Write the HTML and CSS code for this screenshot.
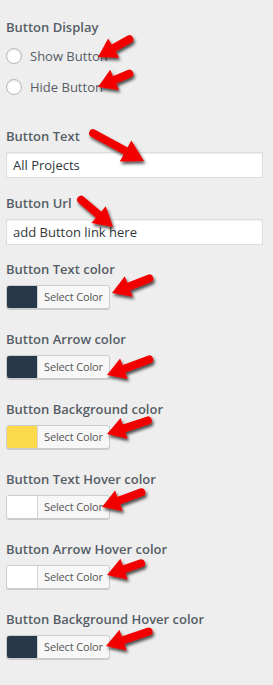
FILE: index.html
```html
<!DOCTYPE html>
<html lang="en">
<head>
  <meta charset="UTF-8">
  <title>Button Settings</title>
  <link rel="stylesheet" href="styles.css">
</head>
<body>

  <div class="panel">
    <div class="label">Button Display</div>
    <label class="radio"><span class="dot"></span>Show Button</label>
    <label class="radio"><span class="dot"></span>Hide Button</label>

    <div class="label first">Button Text</div>
    <div class="input">All Projects</div>

    <div class="label">Button Url</div>
    <div class="input">add Button link here</div>

    <div class="color-field">
      <div class="label">Button Text color</div>
      <div class="picker"><span class="swatch dark"></span><span class="pick-text">Select Color</span></div>
    </div>
    <div class="color-field">
      <div class="label">Button Arrow color</div>
      <div class="picker"><span class="swatch dark"></span><span class="pick-text">Select Color</span></div>
    </div>
    <div class="color-field">
      <div class="label">Button Background color</div>
      <div class="picker"><span class="swatch yellow"></span><span class="pick-text">Select Color</span></div>
    </div>
    <div class="color-field">
      <div class="label">Button Text Hover color</div>
      <div class="picker"><span class="swatch white"></span><span class="pick-text">Select Color</span></div>
    </div>
    <div class="color-field">
      <div class="label">Button Arrow Hover color</div>
      <div class="picker"><span class="swatch white"></span><span class="pick-text">Select Color</span></div>
    </div>
    <div class="color-field">
      <div class="label">Button Background Hover color</div>
      <div class="picker"><span class="swatch dark"></span><span class="pick-text">Select Color</span></div>
    </div>
  </div>

  <!-- red arrows drawn over the panel -->
  <svg class="arrows" width="273" height="685" viewBox="0 0 273 685">
    <defs>
      <filter id="sh" x="-20%" y="-20%" width="150%" height="150%">
        <feDropShadow dx="1.5" dy="2.5" stdDeviation="1.6" flood-color="#000" flood-opacity="0.7"/>
      </filter>
    </defs>
    <g filter="url(#sh)" fill="#f20000" stroke="#f20000" stroke-width="8" stroke-linecap="round">
      <g transform="translate(98 57) rotate(-29.7)"><path stroke="none" d="M0 0L18 -11 18 11Z"/><line x1="14" y1="0" x2="36" y2="0"/></g>
      <g transform="translate(98 87) rotate(-23.2)"><path stroke="none" d="M0 0L18 -11 18 11Z"/><line x1="14" y1="0" x2="34" y2="0"/></g>
      <g transform="translate(144 161) rotate(-151.4)"><path stroke="none" d="M0 0L21 -12 21 12Z"/><line x1="16" y1="0" x2="58" y2="0"/></g>
      <g transform="translate(113 227) rotate(-139.4)"><path stroke="none" d="M0 0L19 -11 19 11Z"/><line x1="14" y1="0" x2="42" y2="0"/></g>
      <g transform="translate(112 293) rotate(-21.3)"><path stroke="none" d="M0 0L18 -11 18 11Z"/><line x1="14" y1="0" x2="40" y2="0"/></g>
      <g transform="translate(107 375) rotate(-20.3)"><path stroke="none" d="M0 0L18 -11 18 11Z"/><line x1="14" y1="0" x2="45" y2="0"/></g>
      <g transform="translate(107 434) rotate(-18.4)"><path stroke="none" d="M0 0L18 -11 18 11Z"/><line x1="14" y1="0" x2="43" y2="0"/></g>
      <g transform="translate(102 507) rotate(-20.4)"><path stroke="none" d="M0 0L18 -11 18 11Z"/><line x1="14" y1="0" x2="42" y2="0"/></g>
      <g transform="translate(107 575) rotate(-18.9)"><path stroke="none" d="M0 0L18 -11 18 11Z"/><line x1="14" y1="0" x2="36" y2="0"/></g>
      <g transform="translate(106 646) rotate(-18.8)"><path stroke="none" d="M0 0L18 -11 18 11Z"/><line x1="14" y1="0" x2="45" y2="0"/></g>
    </g>
  </svg>

</body>
</html>
```

FILE: styles.css
```css
body {
  margin: 0;
  background: #eeeeee;
  font-family: "Open Sans", "Noto Sans", Arial, sans-serif;
  color: #555d66;
  position: relative;
  width: 273px;
  height: 685px;
  overflow: hidden;
}
.panel {
  padding: 17px 10px 0 6px;
}
.label {
  font-size: 13px;
  font-weight: 600;
  line-height: 20px;
  height: 20px;
  white-space: nowrap;
}
.label.first {
  margin-top: 29px;
}
/* radio rows */
.radio {
  display: flex;
  align-items: center;
  gap: 8px;
  height: 20px;
  margin-top: 9px;
  font-size: 13px;
  color: #555d66;
}
.radio + .radio {
  margin-top: 11px;
}
.dot {
  width: 14px;
  height: 14px;
  border: 1px solid #b4b9be;
  border-radius: 50%;
  background: #fff;
  box-shadow: inset 0 1px 2px rgba(0,0,0,0.1);
}
/* text inputs */
.input {
  margin: 6px 0 15px;
  height: 24px;
  line-height: 24px;
  border: 1px solid #dddddd;
  background: #fff;
  padding: 0 6px;
  font-size: 13px;
  color: #32373c;
  box-shadow: inset 0 1px 2px rgba(0,0,0,0.07);
}
.input + .color-field {
  margin-top: -1px;
}
/* color picker buttons */
.color-field {
  height: 70px;
}
.picker {
  margin-top: 6px;
  display: inline-flex;
  height: 22px;
  border: 1px solid #cccccc;
  border-radius: 3px;
  background: #f7f7f7;
  box-shadow: 0 1px 0 #cccccc;
  overflow: hidden;
}
.swatch {
  width: 30px;
  border-right: 1px solid #d5d5d5;
}
.swatch.dark { background: #263849; }
.swatch.yellow { background: #fdda4c; }
.swatch.white { background: #ffffff; }
.pick-text {
  padding: 0 6px;
  font-size: 11px;
  letter-spacing: -0.15px;
  line-height: 22px;
  color: #555555;
}
.arrows {
  position: absolute;
  left: 0;
  top: 0;
}
```
